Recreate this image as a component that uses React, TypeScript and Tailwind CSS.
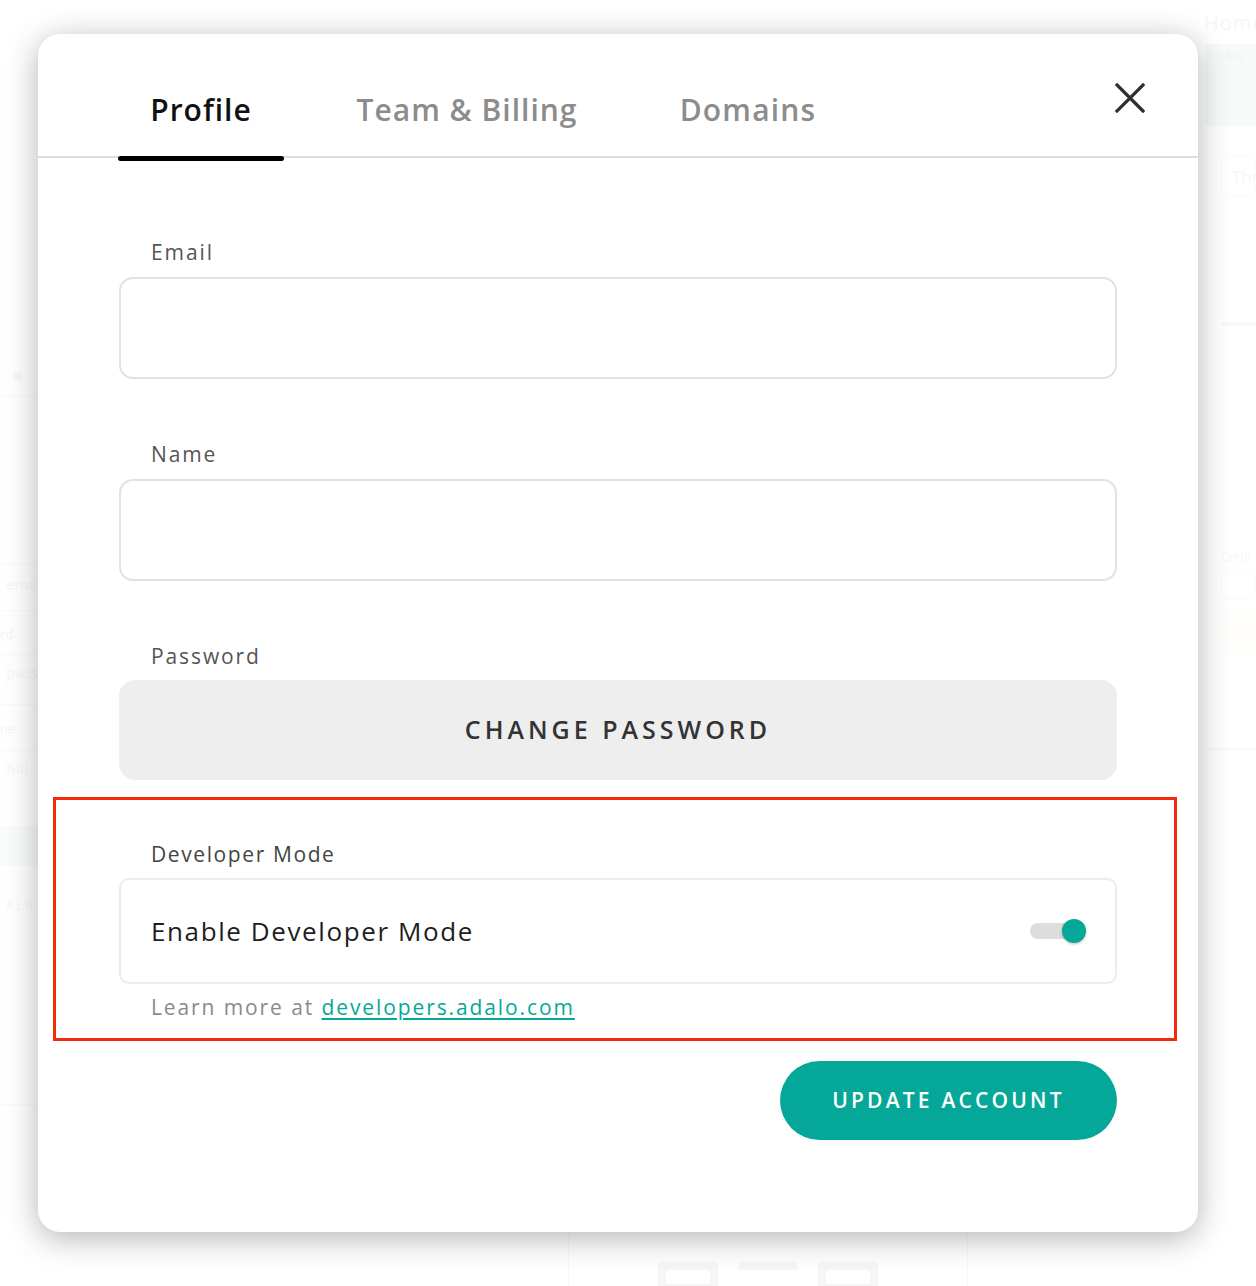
import React from "react";

function CloseIcon() {
  return (
    <svg width="30" height="30" viewBox="0 0 30 30" fill="none">
      <path d="M2 2 L28 28 M28 2 L2 28" stroke="#2f2f2f" strokeWidth="3.2" strokeLinecap="square" />
    </svg>
  );
}

function Backdrop() {
  return (
    <div className="absolute inset-0 text-[#e9e9e9]">
      {/* right side fragments */}
      <div className="absolute left-[1204px] top-[8px] w-[52px] overflow-hidden whitespace-nowrap text-[20px] tracking-[1px]">Home</div>
      <div className="absolute left-[1205px] top-[44px] w-[51px] h-[82px] overflow-hidden whitespace-nowrap bg-[#e9f6f3] rounded-l-[4px] text-[11px] pl-[8px] pt-[4px] text-[#cfe9e4]">.ıl Ada</div>
      <div className="absolute left-[1205px] top-[140px] w-[51px] h-[610px] border-b-2 border-[#f0f0f0]">
        <div className="ml-[16px] mt-[16px] h-[40px] overflow-hidden whitespace-nowrap border border-[#f3f3f3] rounded-l-[4px] pl-[10px] text-[17px] leading-[40px]">Thu</div>
        <div className="ml-[16px] mt-[126px] h-[4px] bg-[#e8f4f1]" />
        <div className="ml-[16px] mt-[222px] overflow-hidden whitespace-nowrap text-[12px] text-[#ececec]">Credi</div>
        <div className="ml-[16px] mt-[6px] h-[28px] border border-[#f4f4f4] rounded-l-[4px]" />
        <div className="ml-[16px] mt-[14px] h-[36px] bg-[#fffbf0] rounded-l-[4px]" />
      </div>
      {/* left side fragments */}
      <div className="absolute left-0 top-[360px] w-[60px] h-[745px] border-b border-[#f2f2f2] overflow-hidden whitespace-nowrap">
        <div className="ml-[12px] h-[28px] text-[20px] text-[#ececec]">●</div>
        <div className="mt-[8px] border-t border-[#f3f3f3]" />
        <div className="mt-[167px] h-[46px] border-t border-[#f3f3f3] pl-[6px] pt-[8px] text-[15px]">ema</div>
        <div className="h-[44px] border-t border-[#f3f3f3] pt-[14px] text-[13px] text-[#e4e4e4]">rd</div>
        <div className="h-[50px] border-t border-[#f3f3f3] pl-[6px] pt-[6px] text-[15px]">pass</div>
        <div className="h-[46px] border-t border-[#f3f3f3] pt-[14px] text-[13px] text-[#e4e4e4]">ne</div>
        <div className="h-[50px] border-t border-[#f3f3f3] pl-[6px] pt-[6px] text-[15px]">full</div>
        <div className="mt-[26px] h-[40px] bg-[#eef7f5]" />
        <div className="mt-[30px] pl-[6px] text-[13px] tracking-[2px]">ALR</div>
      </div>
      {/* bottom centre */}
      <div className="absolute left-[568px] top-[1200px] w-[400px] h-[100px] border-x border-[#f1f1f1]">
        <div className="mt-[18px] text-center text-[12px] text-[#e2e2e2] tracking-[1px]">SIGNUP</div>
        <div className="mt-[26px] flex justify-center gap-[20px]">
          <div className="w-[60px] h-[30px] border-[8px] border-[#e9e9e9]" />
          <div className="w-[60px] h-[30px] border-t-[8px] border-[#e9e9e9]" />
          <div className="w-[60px] h-[30px] border-[8px] border-[#e9e9e9]" />
        </div>
      </div>
    </div>
  );
}

export default function App() {
  return (
    <div className="relative w-full h-[1286px] bg-white overflow-hidden font-['Open_Sans',sans-serif]">
      <Backdrop />
      <div className="absolute inset-0 bg-white/60" />
      <div className="absolute left-[38px] top-[34px] w-[1160px] h-[1198px] bg-white rounded-[22px] shadow-[0_6px_32px_rgba(0,0,0,0.3)]">
        {/* header */}
        <div className="relative flex items-start h-[124px] border-b-2 border-[#dedede]">
          <div className="relative ml-[80px] w-[166px] h-[122px] pt-[28px] flex items-center justify-center text-[30px] font-semibold text-[#111] tracking-[1px]">
            Profile
            <div className="absolute left-0 right-0 bottom-[-5px] h-[5px] rounded-full bg-black" />
          </div>
          <div className="ml-[63px] w-[240px] h-[122px] pt-[28px] flex items-center justify-center text-[30px] font-semibold text-[#8c8c8c] tracking-[1px]">
            Team &amp; Billing
          </div>
          <div className="ml-[81px] w-[160px] h-[122px] pt-[28px] flex items-center justify-center text-[30px] font-semibold text-[#8c8c8c] tracking-[1.2px]">
            Domains
          </div>
          <div className="ml-auto mr-[53px] mt-[49px]">
            <CloseIcon />
          </div>
        </div>

        {/* body */}
        <div className="px-[81px] pt-[80px] flex flex-col">
          <div className="pl-[32px] text-[21px] leading-[28px] text-[#555] tracking-[1.9px]">Email</div>
          <div className="mt-[11px] h-[102px] border-2 border-[#e2e2e2] rounded-[14px]" />

          <div className="mt-[61px] pl-[32px] text-[21px] leading-[28px] text-[#555] tracking-[1.9px]">Name</div>
          <div className="mt-[11px] h-[102px] border-2 border-[#e2e2e2] rounded-[14px]" />

          <div className="mt-[61px] pl-[32px] text-[21px] leading-[28px] text-[#555] tracking-[1.9px]">Password</div>
          <div className="mt-[10px] h-[100px] bg-[#eeeeee] rounded-[16px] flex items-center justify-center text-[25px] font-semibold text-[#333] tracking-[4px]">
            CHANGE PASSWORD
          </div>

          {/* developer mode section */}
          <div className="mt-[17px] ml-[-66px] mr-[-60px] border-[3px] border-[#f52a0c] pl-[63px] pr-[57px] pt-[40px] pb-[17px]">
            <div className="pl-[32px] text-[21px] leading-[28px] text-[#444] tracking-[1.6px]">Developer Mode</div>
            <div className="mt-[10px] h-[106px] border-2 border-[#ececec] rounded-[10px] flex items-center pl-[30px] pr-[33px]">
              <span className="text-[26px] text-[#1e1e1e] tracking-[1.6px]">Enable Developer Mode</span>
              <div className="ml-auto relative w-[52px] h-[16px] rounded-full bg-[#dddddd]">
                <div className="absolute right-[-4px] top-[-4px] w-[24px] h-[24px] rounded-full bg-[#05a898] shadow-[0_1px_3px_rgba(0,0,0,0.25)]" />
              </div>
            </div>
            <div className="mt-[9px] pl-[32px] text-[21px] leading-[28px] text-[#8a8a8a] tracking-[1.9px]">
              Learn more at{" "}
              <a className="text-[#05a898] underline underline-offset-[3px]" href="#">developers.adalo.com</a>
            </div>
          </div>

          <div className="mt-[20px] self-end w-[337px] h-[79px] rounded-full bg-[#05a898] flex items-center justify-center text-white text-[21px] font-semibold tracking-[3.2px]">
            UPDATE ACCOUNT
          </div>
        </div>
      </div>
    </div>
  );
}
